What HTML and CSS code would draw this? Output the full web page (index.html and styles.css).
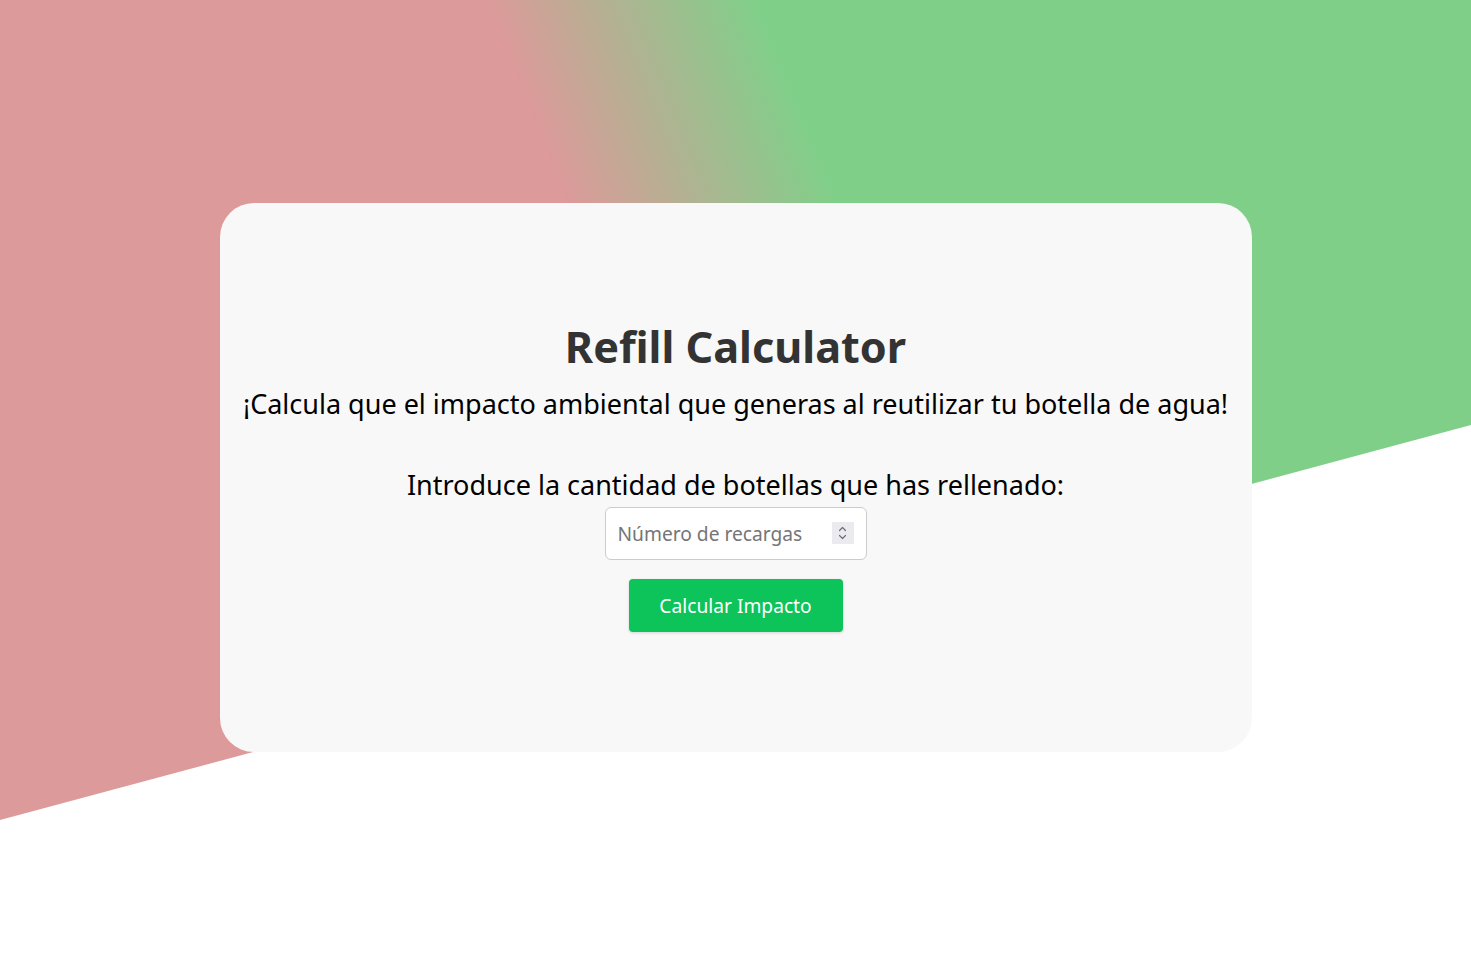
FILE: index.html
```html
<!DOCTYPE html>
<html lang="es">
<head>
<meta charset="utf-8">
<title>Refill Calculator</title>
<link rel="stylesheet" href="styles.css">
</head>
<body>
<div class="bg"></div>
<main class="card">
  <h1 class="title">Refill Calculator</h1>
  <p class="subtitle">¡Calcula que el impacto ambiental que generas al reutilizar tu botella de agua!</p>
  <label class="label" for="refills">Introduce la cantidad de botellas que has rellenado:</label>
  <div class="field">
    <input class="input" id="refills" type="number" placeholder="Número de recargas">
    <span class="spin" aria-hidden="true">
      <svg width="15" height="22" viewBox="0 0 15 22">
        <path d="M4.5 8.5 L7.5 5.5 L10.5 8.5" fill="none" stroke="#6e6e78" stroke-width="1.2" stroke-linecap="round" stroke-linejoin="round"/>
        <path d="M4.5 13.5 L7.5 16.5 L10.5 13.5" fill="none" stroke="#6e6e78" stroke-width="1.2" stroke-linecap="round" stroke-linejoin="round"/>
      </svg>
    </span>
  </div>
  <button class="btn" type="button">Calcular Impacto</button>
</main>
</body>
</html>
```
FILE: styles.css
```css
html, body {
  margin: 0;
  padding: 0;
}
body {
  background: #ffffff;
  font-family: "Noto Sans", "Open Sans", sans-serif;
  min-height: 960px;
  position: relative;
  overflow: hidden;
}
.bg {
  position: absolute;
  left: 0;
  top: 0;
  width: 1471px;
  height: 960px;
  background: linear-gradient(68deg, #dc9a9a 47%, #80cf89 61.5%);
  clip-path: polygon(0 0, 100% 0, 100% 425px, 0 820px);
  z-index: 0;
}
.card {
  position: relative;
  z-index: 1;
  width: 1032px;
  height: 549px;
  margin: 203px auto 0;
  padding-top: 118px;
  box-sizing: border-box;
  background: #f8f8f8;
  border-radius: 34px;
  display: flex;
  flex-direction: column;
  align-items: center;
  text-align: center;
}
.title {
  margin: 0;
  font-size: 43.2px;
  font-weight: 700;
  color: #333333;
  line-height: 52px;
}
.subtitle {
  margin: 12px 0 0;
  font-size: 27px;
  color: #000;
  line-height: 38px;
}
.label {
  margin-top: 43px;
  font-size: 27px;
  color: #000;
  line-height: 38px;
}
.field {
  position: relative;
  margin-top: 2.5px;
  width: 262px;
  height: 53px;
}
.input {
  display: block;
  width: 262px;
  height: 53px;
  margin: 0;
  box-sizing: border-box;
  border: 1px solid #cccccc;
  border-radius: 6px;
  background: #fff;
  padding: 0 12px;
  font-family: "Noto Sans", "Open Sans", sans-serif;
  font-size: 19.2px;
  color: #333;
}
.input::placeholder {
  color: #757575;
}
.input::-webkit-inner-spin-button,
.input::-webkit-outer-spin-button {
  -webkit-appearance: none;
  margin: 0;
}
.spin {
  position: absolute;
  right: 13px;
  top: 15.5px;
  width: 22px;
  height: 22px;
  display: flex;
  align-items: center;
  justify-content: center;
  background: #ebebef;
  border-radius: 1px;
}
.btn {
  margin-top: 19.5px;
  width: 214px;
  height: 53px;
  border: none;
  border-radius: 4px;
  background: #0cc45a;
  color: #ffffff;
  font-family: "Noto Sans", "Open Sans", sans-serif;
  font-size: 19.2px;
  box-shadow: 0 1px 3px rgba(0,0,0,0.15);
}
```
